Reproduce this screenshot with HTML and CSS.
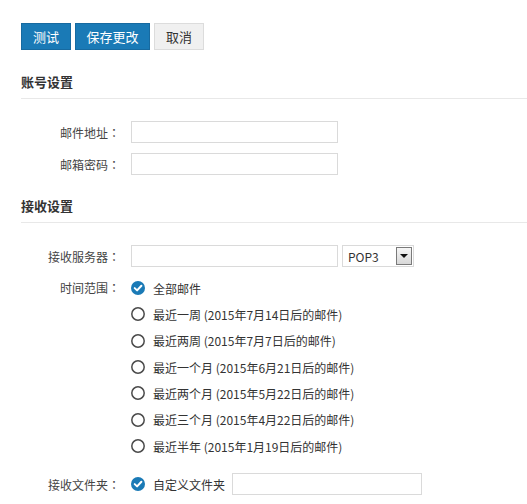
FILE: index.html
```html
<!DOCTYPE html>
<html lang="zh-CN">
<head>
<meta charset="utf-8">
<title>邮箱设置</title>
<link rel="stylesheet" href="styles.css">
</head>
<body>
<div class="page">
  <div class="toolbar">
    <button class="btn btn-primary btn-sm">测试</button>
    <button class="btn btn-primary btn-md">保存更改</button>
    <button class="btn btn-default btn-sm">取消</button>
  </div>

  <h3 class="section-title first">账号设置</h3>
  <div class="form-row row-a">
    <span class="label">邮件地址<span class="colon" lang="ja">：</span></span>
    <input class="text-input" type="text">
  </div>
  <div class="form-row row-b">
    <span class="label">邮箱密码<span class="colon" lang="ja">：</span></span>
    <input class="text-input" type="text">
  </div>

  <h3 class="section-title second">接收设置</h3>
  <div class="form-row row-a">
    <span class="label">接收服务器<span class="colon" lang="ja">：</span></span>
    <input class="text-input" type="text">
    <div class="select">
      <span class="select-text">POP3</span>
      <span class="select-arrow"><span class="tri"></span></span>
    </div>
  </div>

  <div class="form-row row-options">
    <span class="label label-option">时间范围<span class="colon" lang="ja">：</span></span>
    <div class="options">
      <div class="option">
        <svg class="ico" viewBox="0 0 14 14"><circle cx="7" cy="7" r="7" fill="#1a7ab6"/><path d="M3.7 7.1 L6.1 9.4 L10.4 4.7" fill="none" stroke="#fff" stroke-width="2" stroke-linecap="round" stroke-linejoin="round"/></svg>
        <span>全部邮件</span>
      </div>
      <div class="option">
        <svg class="ico" viewBox="0 0 14 14"><circle cx="7" cy="7" r="6.2" fill="none" stroke="#4a4a4a" stroke-width="1.5"/></svg>
        <span>最近一周 (2015年7月14日后的邮件)</span>
      </div>
      <div class="option">
        <svg class="ico" viewBox="0 0 14 14"><circle cx="7" cy="7" r="6.2" fill="none" stroke="#4a4a4a" stroke-width="1.5"/></svg>
        <span>最近两周 (2015年7月7日后的邮件)</span>
      </div>
      <div class="option">
        <svg class="ico" viewBox="0 0 14 14"><circle cx="7" cy="7" r="6.2" fill="none" stroke="#4a4a4a" stroke-width="1.5"/></svg>
        <span>最近一个月 (2015年6月21日后的邮件)</span>
      </div>
      <div class="option">
        <svg class="ico" viewBox="0 0 14 14"><circle cx="7" cy="7" r="6.2" fill="none" stroke="#4a4a4a" stroke-width="1.5"/></svg>
        <span>最近两个月 (2015年5月22日后的邮件)</span>
      </div>
      <div class="option">
        <svg class="ico" viewBox="0 0 14 14"><circle cx="7" cy="7" r="6.2" fill="none" stroke="#4a4a4a" stroke-width="1.5"/></svg>
        <span>最近三个月 (2015年4月22日后的邮件)</span>
      </div>
      <div class="option">
        <svg class="ico" viewBox="0 0 14 14"><circle cx="7" cy="7" r="6.2" fill="none" stroke="#4a4a4a" stroke-width="1.5"/></svg>
        <span>最近半年 (2015年1月19日后的邮件)</span>
      </div>
    </div>
  </div>

  <div class="form-row row-folder">
    <span class="label">接收文件夹<span class="colon" lang="ja">：</span></span>
    <svg class="ico" viewBox="0 0 14 14"><circle cx="7" cy="7" r="7" fill="#1a7ab6"/><path d="M3.7 7.1 L6.1 9.4 L10.4 4.7" fill="none" stroke="#fff" stroke-width="2" stroke-linecap="round" stroke-linejoin="round"/></svg>
    <span class="option-text">自定义文件夹</span>
    <input class="text-input folder-input" type="text">
  </div>
</div>
</body>
</html>
```

FILE: styles.css
```css
* { box-sizing: border-box; }

html, body {
  margin: 0;
  padding: 0;
  background: #ffffff;
}

body {
  font-family: "Noto Sans CJK SC", "Noto Sans", sans-serif;
  font-size: 12px;
  color: #333333;
}

.page {
  padding: 23px 0 0 21px;
}

.toolbar {
  display: flex;
  gap: 4px;
  height: 27px;
}

.btn {
  height: 27px;
  padding: 0;
  font-family: inherit;
  font-size: 13px;
  line-height: 25px;
  border-radius: 0;
  cursor: pointer;
}

.btn-sm { width: 50px; }
.btn-md { width: 75px; }

.btn-primary {
  background: #1a7ab6;
  border: 1px solid #176aa0;
  color: #ffffff;
}

.btn-default {
  background: #f0f0f0;
  border: 1px solid #dcdcdc;
  color: #333333;
}

.section-title {
  margin: 0;
  height: 27px;
  padding-bottom: 6px;
  font-size: 13px;
  line-height: 20px;
  font-weight: bold;
  color: #333333;
  border-bottom: 1px solid #e8e8e8;
}

.section-title.first { margin-top: 22px; }
.section-title.second { margin-top: 21px; }

.form-row {
  display: flex;
  align-items: center;
}

.row-a { margin-top: 22px; height: 22px; }
.row-b { margin-top: 10px; height: 22px; }

.label {
  width: 99px;
  margin-right: 11px;
  text-align: right;
  color: #444444;
  white-space: nowrap;
}

.colon {
  font-family: "Noto Sans CJK JP", "Noto Sans CJK SC", sans-serif;
}

.text-input {
  width: 207px;
  height: 22px;
  margin: 0;
  padding: 0 4px;
  border: 1px solid #dadada;
  border-radius: 0;
  background: #ffffff;
  font-family: inherit;
  font-size: 12px;
  outline: none;
}

.select {
  display: flex;
  align-items: center;
  width: 72px;
  height: 22px;
  margin-left: 4px;
  border: 1px solid #dadada;
  padding: 0 1px 0 5px;
}

.select-text {
  flex: 1;
  color: #333333;
}

.select-arrow {
  display: flex;
  align-items: center;
  justify-content: center;
  width: 16px;
  height: 18px;
  border: 1px solid #7a7a7a;
  background: linear-gradient(#f6f6f6, #d8d8d8);
}

.tri {
  width: 0;
  height: 0;
  border-left: 4px solid transparent;
  border-right: 4px solid transparent;
  border-top: 4px solid #111111;
}

.row-options {
  align-items: flex-start;
  margin-top: 8px;
}

.label-option {
  line-height: 26.33px;
}

.options {
  display: flex;
  flex-direction: column;
}

.option {
  display: flex;
  align-items: center;
  height: 26.33px;
  color: #333333;
  white-space: nowrap;
}

.ico {
  width: 14px;
  height: 14px;
  margin-right: 8px;
  flex: none;
}

.row-folder {
  margin-top: 14px;
  height: 22px;
}

.option-text {
  color: #333333;
  margin-right: 7px;
}

.folder-input {
  width: 190px;
}
```
